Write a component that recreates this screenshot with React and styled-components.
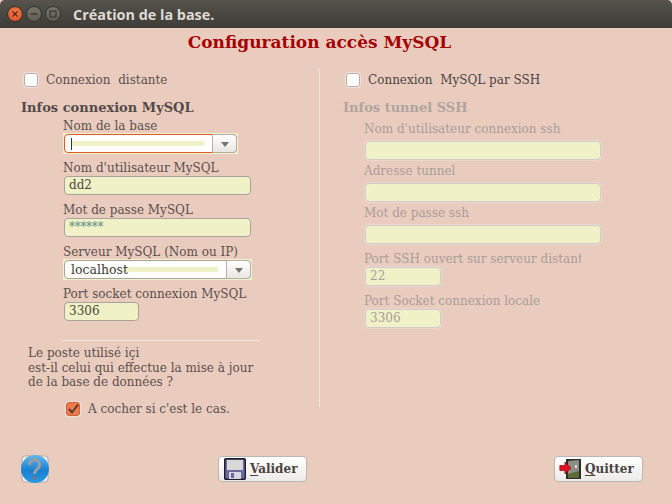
import React from 'react';
import styled, { createGlobalStyle } from 'styled-components';

const Global = createGlobalStyle`
  html, body {
    margin: 0;
    padding: 0;
    background: #eaccbf;
  }
  * {
    box-sizing: border-box;
  }
`;

const Window = styled.div`
  width: 672px;
  height: 504px;
  overflow: hidden;
  display: flex;
  flex-direction: column;
  background: #eaccbf;
  font-family: "DejaVu Serif", serif;
  font-size: 12px;
  color: #5a4f4c;
`;

const TitleBar = styled.div`
  height: 28px;
  flex-shrink: 0;
  display: flex;
  align-items: center;
  padding-left: 7px;
  background: linear-gradient(#55534c, #3d3c37);
  border-radius: 5px 5px 0 0;
`;

const WinButton = styled.div`
  width: 16px;
  height: 16px;
  border-radius: 50%;
  margin-right: 3px;
  display: flex;
  align-items: center;
  justify-content: center;
  background: ${(p) => (p.$close ? 'radial-gradient(circle at 50% 40%, #f08050, #d9481f)' : 'linear-gradient(#77756d, #5e5c55)')};
  border: 1px solid #33322d;
`;

const WinTitle = styled.div`
  margin-left: 9px;
  font-family: "Open Sans", sans-serif;
  font-weight: 700;
  font-size: 14.4px;
  color: #dfdbd2;
`;

const PageTitle = styled.h1`
  margin: 0;
  height: 41px;
  flex-shrink: 0;
  padding: 4px 33px 0 0;
  text-align: center;
  font-size: 17px;
  line-height: 20px;
  font-weight: 700;
  color: #a50000;
`;

const Columns = styled.div`
  display: flex;
  height: 338px;
  flex-shrink: 0;
`;

const Column = styled.div`
  display: flex;
  flex-direction: column;
  width: ${(p) => p.$width}px;
  flex-shrink: 0;
  padding-left: ${(p) => p.$pad}px;
`;

const Divider = styled.div`
  width: 1px;
  flex-shrink: 0;
  background: #f3e4dc;
`;

const CheckRow = styled.label`
  display: flex;
  align-items: center;
  gap: 8px;
  height: 20px;
  flex-shrink: 0;
  margin: ${(p) => p.$margin};
  white-space: pre;
  color: ${(p) => p.$color || 'inherit'};
`;

const CheckBox = styled.span`
  width: 14px;
  height: 14px;
  flex-shrink: 0;
  border-radius: 3px;
  background: #fff;
  border: 1px solid #b9ada7;
  box-shadow: 0 0 0 1px #f0e0d8;
`;

const CheckedBox = styled(CheckBox)`
  display: flex;
  align-items: center;
  justify-content: center;
  background: #ec7a4c;
  border-color: #c9623a;
`;

const Heading = styled.div`
  margin: ${(p) => p.$margin};
  height: 16px;
  flex-shrink: 0;
  line-height: 18px;
  font-size: 13px;
  font-weight: 700;
  color: ${(p) => (p.$off ? '#b0a49e' : '#544a48')};
`;

const Fields = styled.div`
  display: flex;
  flex-direction: column;
  flex-shrink: 0;
  padding-left: ${(p) => p.$pad}px;
`;

const Label = styled.div`
  height: 16px;
  line-height: 18px;
  white-space: nowrap;
  overflow: hidden;
  flex-shrink: 0;
  max-width: 217px;
  color: ${(p) => (p.$off ? '#a99e99' : 'inherit')};
  margin-top: ${(p) => p.$top || 0}px;
  margin-bottom: ${(p) => p.$bottom || 0}px;
`;

const Input = styled.div`
  width: ${(p) => p.$width}px;
  height: 19px;
  flex-shrink: 0;
  margin-left: 1px;
  padding-left: 4px;
  line-height: 17px;
  font-size: 12px;
  background: #f1f1c8;
  border-radius: 4px;
  border: 1px solid ${(p) => (p.$off ? '#d3c9c6' : '#a8a29e')};
  box-shadow: 0 0 0 1px ${(p) => (p.$off ? '#e9d8d0' : 'transparent')};
  color: ${(p) => (p.$off ? '#a89f96' : '#4a4a38')};
`;

const Stars = styled.span`
  display: block;
  font-size: 12px;
  letter-spacing: -0.3px;
  color: #5c8c84;
`;

const ComboWrap = styled.div`
  width: ${(p) => p.$width}px;
  height: 21px;
  flex-shrink: 0;
  padding: 1px;
  background: #f1f1c8;
`;

const Combo = styled.div`
  position: relative;
  display: flex;
  height: 19px;
  background: #fff;
  border-radius: 4px;
  border: 1px solid ${(p) => (p.$focus ? '#dc5a28' : '#a8a29e')};
  font-size: 12.5px;
  line-height: 18px;
  color: #3d3a34;
`;

const ComboText = styled.div`
  flex: 1;
  padding-left: 6px;
  position: relative;
  span {
    position: relative;
  }
`;

const Stripe = styled.div`
  position: absolute;
  top: 6px;
  left: ${(p) => p.$left}px;
  right: 8px;
  height: 5px;
  background: #f1f1c8;
`;

const Caret = styled.div`
  position: absolute;
  left: 6px;
  top: 3px;
  width: 1px;
  height: 12px;
  background: #333;
`;

const ComboArrow = styled.div`
  width: 25px;
  margin: -1px -1px -1px 0;
  display: flex;
  align-items: center;
  justify-content: center;
  background: linear-gradient(#fff, #e8e6e3);
  border: 1px solid #b5afaa;
  border-radius: 0 4px 4px 0;
  &::after {
    content: '';
    margin-top: 2px;
    border-left: 4px solid transparent;
    border-right: 4px solid transparent;
    border-top: 5px solid #77736e;
  }
`;

const Rule = styled.div`
  width: 198px;
  height: 1px;
  flex-shrink: 0;
  margin: 19px 0 5px 41px;
  background: #f3e4dc;
`;

const Note = styled.div`
  padding-left: 7px;
  flex-shrink: 0;
  line-height: 14.5px;
`;

const Footer = styled.div`
  display: flex;
  align-items: center;
  padding: 47px 29px 0 20px;
`;

const HelpBox = styled.div`
  width: 30px;
  height: 30px;
  margin-right: 168px;
`;

const Button = styled.div`
  display: flex;
  align-items: center;
  gap: ${(p) => p.$gap}px;
  width: 89px;
  height: 26px;
  padding-left: ${(p) => p.$pad}px;
  margin-left: ${(p) => (p.$auto ? 'auto' : 0)};
  background: linear-gradient(#ffffff, #ecebe9);
  border: 1px solid #bdb5b0;
  border-radius: 4px;
  font-weight: 700;
  font-size: 12px;
  color: #4a4240;
  u {
    text-underline-offset: 2px;
  }
`;

const Floppy = () => (
  <svg width="22" height="22" viewBox="0 0 22 22">
    <rect x="0.7" y="0.7" width="20.6" height="20.6" rx="1" fill="#6a6a9c" stroke="#1c1c2c" strokeWidth="1.4" />
    <rect x="3" y="2" width="16" height="10" fill="#d8d8d8" />
    <rect x="5" y="14" width="12" height="7" fill="#d6d6e4" />
    <rect x="7" y="15" width="3" height="5" fill="#6a6a9c" />
  </svg>
);

const ExitDoor = () => (
  <svg width="24" height="22" viewBox="0 0 24 22">
    <rect x="7" y="1" width="15" height="20" fill="#2c2c28" />
    <path d="M9 3l11 -1v15l-11 3z" fill="#8d8d84" />
    <path d="M9 16l11-3v7H9z" fill="#5d6a34" />
    <rect x="16" y="7" width="2" height="3" fill="#ddd" />
    <path d="M1 8h6V4l7 7-7 7v-4H1z" fill="#e01020" stroke="#8a0010" strokeWidth="0.8" transform="scale(0.85) translate(0,0.8)" />
  </svg>
);

const HelpIcon = () => (
  <svg width="30" height="30" viewBox="0 0 30 30">
    <defs>
      <linearGradient id="helpBlue" x1="0" y1="0" x2="0" y2="1">
        <stop offset="0" stopColor="#62b8ec" />
        <stop offset="0.55" stopColor="#1a80d0" />
        <stop offset="1" stopColor="#2a9ae8" />
      </linearGradient>
    </defs>
    <rect x="2" y="2" width="26" height="26" rx="3" fill="#f4f2f0" stroke="#b0aaa6" />
    <circle cx="15" cy="15" r="14" fill="url(#helpBlue)" />
    <path d="M9.5 11C9.5 4 19.5 4 19.5 11 19.5 15.5 14.5 15 14.5 20" fill="none" stroke="#9c9ea4" strokeWidth="3" />
    <circle cx="14.5" cy="24" r="1.8" fill="#8a7070" />
  </svg>
);

const App = () => {
  return (
    <Window>
      <Global />
      <TitleBar>
        <WinButton $close>
          <svg width="8" height="8" viewBox="0 0 8 8">
            <path d="M1.5 1.5l5 5M6.5 1.5l-5 5" stroke="#5a2010" strokeWidth="1.2" />
          </svg>
        </WinButton>
        <WinButton>
          <svg width="8" height="8" viewBox="0 0 8 8">
            <path d="M0.5 4h7" stroke="#3a3934" strokeWidth="1.4" />
          </svg>
        </WinButton>
        <WinButton>
          <svg width="8" height="8" viewBox="0 0 8 8">
            <rect x="1" y="1" width="6" height="6" fill="none" stroke="#3a3934" strokeWidth="1.2" />
          </svg>
        </WinButton>
        <WinTitle>Création de la base.</WinTitle>
      </TitleBar>
      <PageTitle>Configuration accès MySQL</PageTitle>
      <Columns>
        <Column $width={319} $pad={21}>
          <CheckRow $margin="1px 0 0 3px">
            <CheckBox />
            Connexion  distante
          </CheckRow>
          <Heading $margin="9px 0 0 0">Infos connexion MySQL</Heading>
          <Fields $pad={42}>
            <Label $top={2}>Nom de la base</Label>
            <ComboWrap $width={175}>
              <Combo $focus>
                <ComboText>
                  <Stripe $left={7} />
                  <Caret />
                </ComboText>
                <ComboArrow />
              </Combo>
            </ComboWrap>
            <Label $top={5} $bottom={1}>Nom d'utilisateur MySQL</Label>
            <Input $width={187}>dd2</Input>
            <Label $top={6} $bottom={1}>Mot de passe MySQL</Label>
            <Input $width={187}><Stars>******</Stars></Input>
            <Label $top={6}>Serveur MySQL (Nom ou IP)</Label>
            <ComboWrap $width={189}>
              <Combo>
                <ComboText>
                  <Stripe $left={58} />
                  <span>localhost</span>
                </ComboText>
                <ComboArrow />
              </Combo>
            </ComboWrap>
            <Label $top={5} $bottom={1}>Port socket connexion MySQL</Label>
            <Input $width={75}>3306</Input>
          </Fields>
          <Rule />
          <Note>
            Le poste utilisé içi
            <br />
            est-il celui qui effectue la mise à jour
            <br />
            de la base de données ?
          </Note>
          <CheckRow $margin="9px 0 0 45px">
            <CheckedBox>
              <svg width="12" height="12" viewBox="0 0 12 12">
                <path d="M2 6l3 3.5 6-8" fill="none" stroke="#5a3a2c" strokeWidth="2" />
              </svg>
            </CheckedBox>
            A cocher si c'est le cas.
          </CheckRow>
        </Column>
        <Divider />
        <Column $width={352} $pad={23}>
          <CheckRow $margin="1px 0 0 3px" $color="#4a4442">
            <CheckBox />
            Connexion  MySQL par SSH
          </CheckRow>
          <Heading $off $margin="9px 0 0 0">Infos tunnel SSH</Heading>
          <Fields $pad={21}>
            <Label $off $top={5} $bottom={5}>Nom d'utilisateur connexion ssh</Label>
            <Input $off $width={236}></Input>
            <Label $off $top={2} $bottom={5}>Adresse tunnel</Label>
            <Input $off $width={236}></Input>
            <Label $off $top={2} $bottom={5}>Mot de passe ssh</Label>
            <Input $off $width={236}></Input>
            <Label $off $top={6} $bottom={1}>Port SSH ouvert sur serveur distant</Label>
            <Input $off $width={76}>22</Input>
            <Label $off $top={6} $bottom={1}>Port Socket connexion locale</Label>
            <Input $off $width={76}>3306</Input>
          </Fields>
        </Column>
      </Columns>
      <Footer>
        <HelpBox>
          <HelpIcon />
        </HelpBox>
        <Button $pad={5} $gap={4}>
          <Floppy />
          <span><u>V</u>alider</span>
        </Button>
        <Button $auto $pad={4} $gap={2}>
          <ExitDoor />
          <span><u>Q</u>uitter</span>
        </Button>
      </Footer>
    </Window>
  );
};

export default App;
